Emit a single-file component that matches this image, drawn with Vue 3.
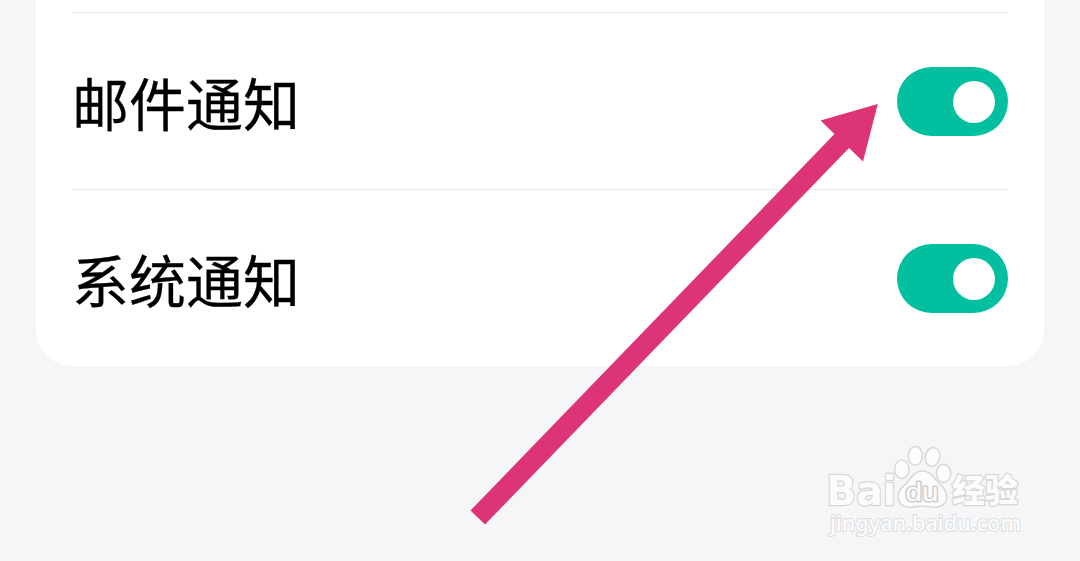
<script setup>
import { ref } from 'vue';

const settings = ref([
  { key: 'mail', label: '邮件通知', enabled: true },
  { key: 'system', label: '系统通知', enabled: true },
]);

const toggleSetting = (item) => {
  item.enabled = !item.enabled;
};
</script>

<template>
  <div class="settings-page">
    <div class="settings-card">
      <div v-for="item in settings" :key="item.key" class="setting-row">
        <span class="setting-label">{{ item.label }}</span>
        <button
          type="button"
          role="switch"
          class="switch"
          :class="{ 'switch-on': item.enabled }"
          :aria-checked="item.enabled"
          :aria-label="item.label"
          @click="toggleSetting(item)"
        >
          <span class="switch-knob"></span>
        </button>
      </div>
    </div>

    <svg class="pointer-arrow" viewBox="0 0 408 421" aria-hidden="true">
      <path d="M407.8 0 393 57.5 379 44 15 420.5 0.5 406.5 364.5 30 350.5 16.5Z" fill="#dc3477" />
    </svg>

    <svg class="watermark" viewBox="0 0 210 105">
      <g class="mark-shape">
        <ellipse cx="76.8" cy="29.2" rx="7.3" ry="9.2" />
        <ellipse cx="90.4" cy="15.9" rx="7" ry="9.5" />
        <ellipse cx="107.5" cy="17" rx="7.3" ry="9.5" transform="rotate(12 107.5 17)" />
        <ellipse cx="118.5" cy="33.4" rx="7.2" ry="9" />
        <path d="M97 31C90 31 87 36.5 82.5 42C78 47 73.2 49 73.2 57C73.2 63.5 78 67.2 84 67.2C89 67.2 92 66 97 66C102 66 105 67.2 110 67.2C117 67.2 121.8 63 121.8 57C121.8 49 116 46 112 41C108 36 105 31 97 31Z" />
      </g>
      <g class="mark-text">
        <text class="mark-latin" x="1.2" y="65.2" textLength="70" lengthAdjust="spacingAndGlyphs">Bai</text>
        <text class="mark-du" x="80.5" y="60.8" textLength="33" lengthAdjust="spacingAndGlyphs">du</text>
        <text class="mark-cjk" x="127" y="62.4" textLength="66" lengthAdjust="spacingAndGlyphs">经验</text>
        <text class="mark-url" x="5" y="90.5" textLength="191" lengthAdjust="spacingAndGlyphs">jingyan.baidu.com</text>
      </g>
    </svg>
  </div>
</template>

<style>
body {
  background: #f4f6f8;
}
</style>

<style scoped>
.settings-page {
  position: relative;
  box-sizing: border-box;
  height: 561px;
  padding: 0 36px;
  overflow: hidden;
  background: #f4f6f8;
  font-family: Roboto, "Noto Sans CJK SC", sans-serif;
}

.settings-card {
  padding: 12px 36px 0;
  border-radius: 0 0 36px 36px;
  background: #fff;
}

.setting-row {
  display: flex;
  align-items: center;
  justify-content: space-between;
  box-sizing: border-box;
  height: 177px;
  border-top: 1px solid #ebebeb;
}

.setting-label {
  padding-top: 12px;
  color: #000;
  font-size: 57px;
  line-height: 80px;
  -webkit-text-stroke: 0.3px #000;
}

.switch {
  display: flex;
  align-items: center;
  box-sizing: border-box;
  width: 111px;
  height: 69px;
  margin: 0;
  padding: 1px 13px 0;
  border: 0;
  border-radius: 35px;
  background: #d8dadd;
  cursor: pointer;
}

.switch-on {
  justify-content: flex-end;
  background: #02bf9f;
}

.switch-knob {
  width: 42px;
  height: 42px;
  border-radius: 50%;
  background: #fff;
}

.pointer-arrow {
  position: absolute;
  top: 103.5px;
  left: 470px;
  width: 408px;
  height: 421px;
  pointer-events: none;
}

.watermark {
  position: absolute;
  top: 440px;
  left: 825px;
  width: 210px;
  height: 105px;
  pointer-events: none;
}

.mark-shape {
  fill: #fcfcfc;
  stroke: #d9d9da;
  stroke-width: 1.6;
}

.mark-text {
  fill: #fcfcfc;
  stroke: #d6d6d7;
  stroke-width: 2.4;
  stroke-linejoin: round;
  paint-order: stroke;
}

.mark-latin {
  font: 700 41px "DejaVu Sans", sans-serif;
}

.mark-du {
  font: 400 26.5px "Liberation Sans", sans-serif;
  stroke: #cfcfd0;
  stroke-width: 3;
}

.mark-cjk {
  font: 900 32px "Noto Sans CJK SC", sans-serif;
}

.mark-url {
  font: 500 22px "Noto Sans", sans-serif;
  stroke: #dddddf;
  stroke-width: 2;
}
</style>
